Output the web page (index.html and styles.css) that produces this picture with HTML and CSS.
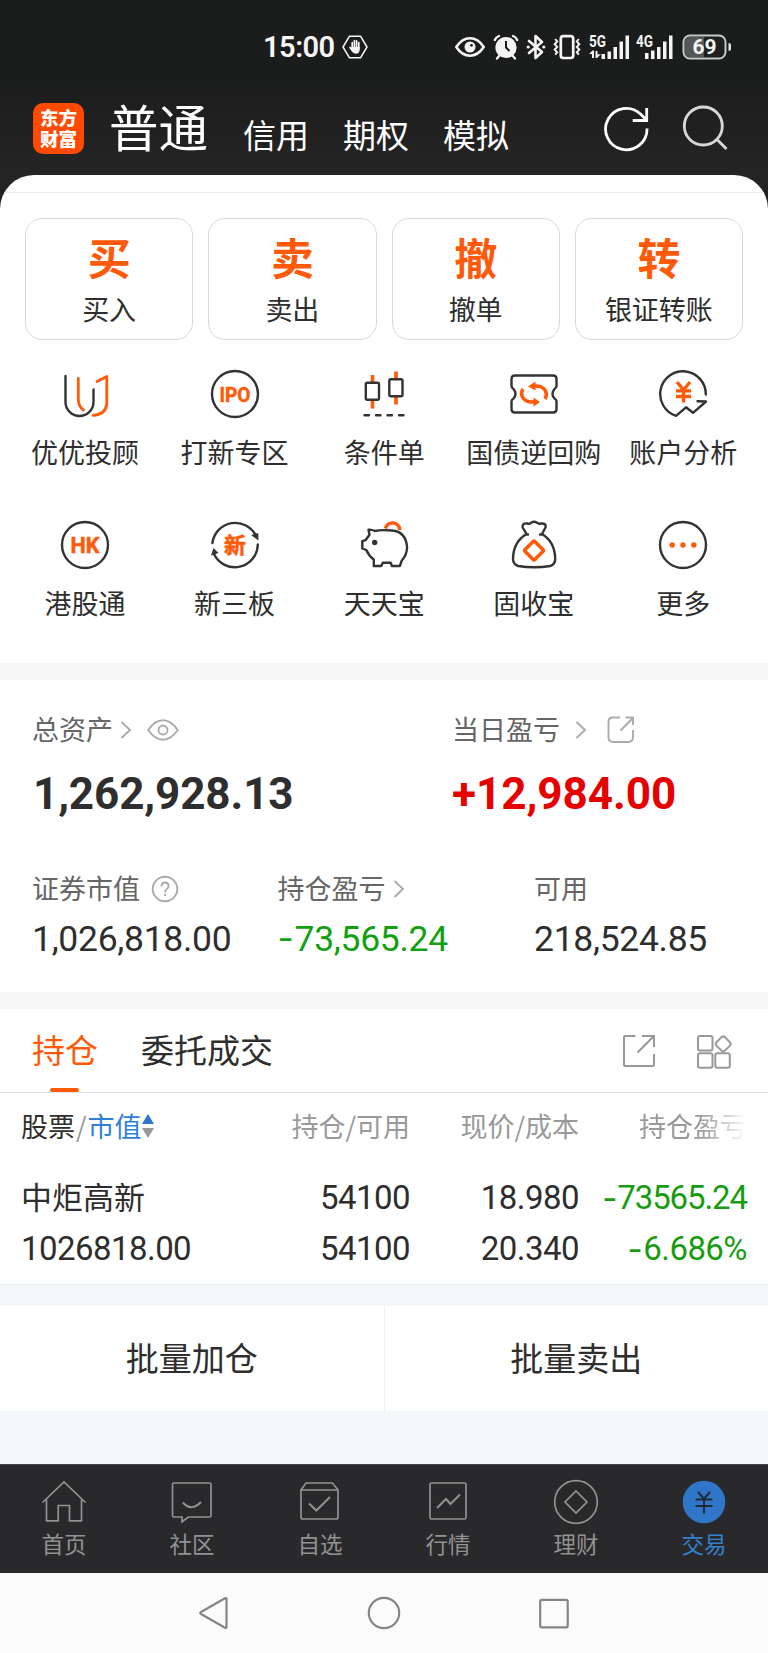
FILE: index.html
```html
<!DOCTYPE html>
<html lang="zh-CN">
<head>
<meta charset="utf-8">
<title>交易</title>
<link rel="stylesheet" href="styles.css">
</head>
<body>
<div class="top">
  <div class="status">
    <span class="clock">15:00</span>
    <svg class="hex" width="26" height="24" viewBox="0 0 26 24"><path d="M7.500 1.200h11L25 12l-6.500 10.800h-11L1 12z" fill="none" stroke="#f4f4f4" stroke-width="1.500" stroke-linejoin="round"/><g stroke="#f4f4f4" stroke-width="1.700" stroke-linecap="round"><path d="M10.200 7.500v6M12.400 5.500v8M14.600 5.800v8M16.800 7.700v6M8 12.500l3 4"/></g><path d="M9.400 12h8.200v3.500q-.8 3.300-3.600 3.300-2.300 0-3.600-2.500z" fill="#f4f4f4"/></svg>
    <svg class="s-eye" width="30" height="20" viewBox="0 0 30 20"><path d="M1.300 10Q7 1.300 15 1.300T28.700 10Q23 18.700 15 18.700T1.300 10z" fill="none" stroke="#f4f4f4" stroke-width="2.600"/><circle cx="15" cy="10" r="5.500" fill="#f4f4f4"/><circle cx="16.500" cy="8.300" r="1.400" fill="#1b1c1c"/></svg>
    <svg class="s-alarm" width="26" height="26" viewBox="0 0 26 26"><circle cx="13" cy="13.500" r="10.600" fill="#f4f4f4"/><path d="M13 7v6.500l3.500 3.500" fill="none" stroke="#1b1c1c" stroke-width="2"/><path d="M1.800 6q1.200-3 4.200-4M24.200 6q-1.200-3-4.200-4M4 24.500l2.500-3M22 24.500l-2.500-3" stroke="#f4f4f4" stroke-width="2.300" fill="none" stroke-linecap="round"/></svg>
    <svg class="s-bt" width="20" height="26" viewBox="0 0 20 26"><path d="M3 7l13 11-6.500 6V2L16 8 3 19" fill="none" stroke="#f4f4f4" stroke-width="2.600" stroke-linejoin="round" stroke-linecap="round"/><circle cx="2.200" cy="13" r="1.600" fill="#f4f4f4"/><circle cx="17.800" cy="13" r="1.600" fill="#f4f4f4"/></svg>
    <svg class="s-vib" width="28" height="26" viewBox="0 0 28 26"><rect x="7.800" y="2.200" width="12.400" height="21.800" rx="2.500" fill="none" stroke="#f4f4f4" stroke-width="2.700"/><path d="M2.200 5l2 2.500-2.500 2.700 2.500 2.700-2.500 2.700 2.500 2.600-2 2.500M25.800 5l-2 2.500 2.500 2.700-2.500 2.700 2.500 2.700-2.500 2.600 2 2.500" fill="none" stroke="#f4f4f4" stroke-width="2"/></svg>
    <svg class="s-5g" width="41" height="38" viewBox="0 -6 41 38"><text x="0" y="12.500" class="sig" textLength="17" lengthAdjust="spacingAndGlyphs">5G</text><path fill="#f4f4f4" d="M12.500 20h3.500v5h-3.500zM18.500 17.500h3.500v7.500h-3.500zM24.500 13h3.500v12h-3.500zM30.500 7.500h3.500v17.500h-3.500zM36.500 1.500h3.500v23.500h-3.500zM0 20l3.500-3.500h1.500v7.500h-2v-4zM6.500 17h2v3.500l3.500-.5-4 4h-1.500z"/></svg>
    <svg class="s-4g" width="38" height="38" viewBox="0 -6 38 38"><text x="0" y="12.500" class="sig" textLength="17" lengthAdjust="spacingAndGlyphs">4G</text><path d="M9 19h3.500v6H9zM15 16.500h3.500v8.500H15zM21 13h3.500v12H21zM27 7.500h3.500v17.500H27zM33 1.500h3.500v23.500H33z" fill="#f4f4f4"/></svg>
    <svg class="s-bat" width="50" height="26" viewBox="0 0 50 26"><rect x="1.500" y="1.500" width="42" height="23" rx="6.500" fill="#1f2020" stroke="#c8caca" stroke-width="2"/><path d="M8 3h14v20H8q-5 0-5-5V8q0-5 5-5z" fill="#555757"/><path d="M46.500 9q2.500 0 2.500 2v4q0 2-2.500 2z" fill="#e4e4e4"/><text x="22.500" y="20" text-anchor="middle" class="batt" textLength="24">69</text></svg>
  </div>
  <div class="header">
    <div class="logo">东方<br>财富</div>
    <span class="mode mode-on">普通</span>
    <span class="mode">信用</span>
    <span class="mode">期权</span>
    <span class="mode">模拟</span>
    <svg class="refresh" width="48" height="48" viewBox="0 0 48 48" fill="none" stroke="#fff" stroke-width="2.800"><path d="M45 24.500A20.700 20.700 0 1 1 38.500 10l5.500 5.500M44.700 4v12.500h-14"/></svg>
    <svg class="search" width="48" height="48" viewBox="0 0 48 48" fill="none" stroke="#d8d8d8" stroke-width="2.800"><circle cx="21.300" cy="22" r="19"/><path d="M34 34.500L44.500 45"/></svg>
  </div>
</div>

<div class="sheet">
  <div class="sheet-line"></div>
  <div class="cards">
    <div class="card"><b>买</b><span>买入</span></div>
    <div class="card"><b>卖</b><span>卖出</span></div>
    <div class="card"><b>撤</b><span>撤单</span></div>
    <div class="card"><b>转</b><span>银证转账</span></div>
  </div>
  <div class="grid">
    <div class="tool"><svg viewBox="0 0 50 50"><path class="k" d="M5.500 7v26a14 14 0 0 0 28 0V20.500"/><path class="o" d="M18.300 9.500V30q0 7.500 5.200 11M37 12.500l9.800-5V35q-1.500 11-14 11.300"/></svg><span>优优投顾</span></div>
    <div class="tool"><svg viewBox="0 0 50 50"><circle class="k" cx="25" cy="25" r="23"/><text x="25" y="32.500" class="ic ipo" textLength="31" lengthAdjust="spacingAndGlyphs">IPO</text></svg><span>打新专区</span></div>
    <div class="tool"><svg viewBox="0 0 50 50"><path class="o w" d="M13.500 6v7M13.500 32v7.500M37 2.500v7M37 28v7.500"/><rect class="k" x="6.800" y="13.800" width="13.200" height="17" rx="1.500"/><rect class="k" x="30.300" y="10.300" width="13.200" height="17" rx="1.500"/><path class="k" stroke-dasharray="4.500 7" d="M5.500 46.300h41"/></svg><span>条件单</span></div>
    <div class="tool"><svg viewBox="0 0 50 50"><path class="k" d="M6 6.500h38q3.500 0 3.500 3.500v7q0 2-2 3-4 5 0 9.500 2 1 2 3V40q0 3.500-3.500 3.500H6q-3.500 0-3.500-3.500v-7.500q0-2 2-3 4-4.500 0-9.500-2-1-2-3v-7q0-3.500 3.500-3.500z"/><path class="o w" d="M14 20q-3 5 .5 9.500 2.500 3.500 9 3.500h3M36 30q3-5-.5-9.500-2.500-3.500-9-3.500h-3"/><path d="M19 17.500l7.500-5v9zM31 33l-6.500 4.500v-9z" fill="#ff5a0a"/></svg><span>国债逆回购</span></div>
    <div class="tool"><svg viewBox="0 0 50 50"><path class="k" d="M47.800 25.500A22.800 22.800 0 1 0 18 46.800l10-8.500 7 5.500L48 32.500l-8.500-.2"/><path class="o yen" d="M19 13l6.500 8 6.500-8M25.500 21v12.500M18 21.800h15M18 27.500h15"/></svg><span>账户分析</span></div>
    <div class="tool"><svg viewBox="0 0 50 50"><circle class="k" cx="25" cy="25" r="23"/><text x="25" y="32.800" class="ic hk" textLength="29" lengthAdjust="spacingAndGlyphs">HK</text></svg><span>港股通</span></div>
    <div class="tool"><svg viewBox="0 0 50 50"><path class="k" d="M2.400 23A23 23 0 0 1 46 16M47.800 24.500A23 23 0 0 1 4 34"/><path d="M41 15l7.300-2 .2 7.500zM1 35.500l2.500-7.500 5 5z" fill="#333"/><text x="25" y="33" class="ic xin">新</text></svg><span>新三板</span></div>
    <div class="tool"><svg viewBox="0 0 50 50"><path class="o w" d="M26.500 8.500a7.200 7.200 0 0 1 14.200 1.500"/><path class="k" d="M16 11q-4-1.800-6.500-1.300l1 5-4 5.500-3.200 1v7.300l4 1.500q2.500 6 7.500 9.500v6.500h7.500l1.500-3.200h8l1 3.200h8l2-5.500q5-5.500 5.300-13Q47 11.500 33 10.500 22 9.500 16 11z"/><circle cx="15.700" cy="22.500" r="2.700" fill="#333"/></svg><span>天天宝</span></div>
    <div class="tool"><svg viewBox="0 0 50 50"><path class="k" d="M17 14.500h2M17.500 14L13.700 7.500q-.7-4.700 4.500-4 2.500.8 3.800-.8 3-1.800 6 0 1.500 1.500 4 .8 5.500-.5 4.500 4L33 14q13 8 13.200 25 0 5.500-5 7-16 2.500-32 0-5-1.500-5.200-7Q4.200 22 17.500 14zM31 14.500h2"/><rect class="o dia" x="18" y="23.500" width="14" height="14" rx="1.500" transform="rotate(45 25 30.500)"/></svg><span>固收宝</span></div>
    <div class="tool"><svg viewBox="0 0 50 50"><circle class="k" cx="25" cy="25" r="23"/><g fill="#ff5a0a"><circle cx="14.200" cy="25" r="2.700"/><circle cx="25" cy="25" r="2.700"/><circle cx="35.800" cy="25" r="2.700"/></g></svg><span>更多</span></div>
  </div>
</div>

<div class="assets">
  <div class="totals">
    <div class="stat total">
      <div class="label">总资产<svg class="chev" width="12" height="20" viewBox="0 0 12 20"><path d="M1.500 2l8.500 8-8.500 8"/></svg><svg class="eye" width="32" height="22" viewBox="0 0 32 22"><path d="M1.200 11Q8 1.300 16 1.300T30.800 11Q24 20.700 16 20.700T1.200 11z"/><circle cx="16" cy="11" r="4.500"/></svg></div>
      <div class="big">1,262,928.13</div>
    </div>
    <div class="stat">
      <div class="label">当日盈亏<svg class="chev far" width="12" height="20" viewBox="0 0 12 20"><path d="M1.500 2l8.500 8-8.500 8"/></svg><svg class="share" width="28" height="28" viewBox="0 0 28 28"><path d="M13 1.500H6Q1.500 1.500 1.500 6v15q0 5 5 5h14.500q5 0 5-5v-7M13.500 14.500L26 2M18.500 1.500H26V9"/></svg></div>
      <div class="big red">+12,984.00</div>
    </div>
  </div>
  <div class="details">
    <div class="stat"><div class="label">证券市值<svg class="help" width="28" height="28" viewBox="0 0 28 28"><circle cx="14" cy="14" r="12.300"/><path d="M10.500 11.500q0-4 3.500-4t3.500 3.500q0 2-1.800 3.200-1.700 1.200-1.700 3.300M14 19v2"/></svg></div><div class="mid">1,026,818.00</div></div>
    <div class="stat"><div class="label">持仓盈亏<svg class="chev" width="12" height="20" viewBox="0 0 12 20"><path d="M1.500 2l8.500 8-8.500 8"/></svg></div><div class="mid green"><i>-</i>73,565.24</div></div>
    <div class="stat"><div class="label">可用</div><div class="mid">218,524.85</div></div>
  </div>
</div>

<div class="tabs">
  <span class="tab on">持仓</span>
  <span class="tab">委托成交</span>
  <svg class="tab-share" width="34" height="34" viewBox="0 0 34 34"><path d="M13.500 2H3q-1 0-1 1v28q0 1 1 1h28q1 0 1-1V20M15.500 18.500L31.500 2.500M20 2h12v11"/></svg>
  <svg class="tab-grid" width="36" height="36" viewBox="0 0 36 36"><rect x="2" y="2" width="14.500" height="14.500" rx="2"/><rect x="2" y="19.300" width="14.500" height="14.500" rx="2"/><rect x="19.300" y="19.300" width="14.500" height="14.500" rx="2"/><rect x="21.200" y="3.900" width="12" height="12" rx="2.800" transform="rotate(45 27.200 9.900)"/></svg>
</div>

<div class="table">
  <div class="row head">
    <div class="first"><span class="dark">股票</span><span class="slash">/</span><span class="blue">市值</span><svg width="12" height="26" viewBox="0 0 12 26"><path d="M6 1l6 10H0z" fill="#2f75c8"/><path d="M6 25L0 15h12z" fill="#999"/></svg></div>
    <div>持仓/可用</div><div>现价/成本</div><div class="fade">持仓盈亏</div>
  </div>
  <div class="row name"><div class="first">中炬高新</div><div>54100</div><div>18.980</div><div class="green loss"><i>-</i>73565.24</div></div>
  <div class="row"><div class="first">1026818.00</div><div>54100</div><div>20.340</div><div class="green"><i>-</i>6.686%</div></div>
</div>

<div class="batch"><div>批量加仓</div><div>批量卖出</div></div>

<div class="nav">
  <div class="item"><svg viewBox="0 0 48 48"><path d="M2.500 24.500L24 4l21.500 20.500M6.500 21.500V42.800h11.700V27.500H29.500v15.300h12V21.500"/></svg><span>首页</span></div>
  <div class="item"><svg viewBox="0 0 48 48"><path d="M6 5h35.500q1.500 0 1.500 1.500v31q0 1.500-1.500 1.500H20.500L14 43.800V39H6q-1.500 0-1.500-1.500v-31Q4.500 5 6 5z"/><path d="M14.800 24.500Q23.500 34 33 24" stroke-width="2"/></svg><span>社区</span></div>
  <div class="item"><svg viewBox="0 0 48 48"><path d="M5 12v27q0 2 2 2h33q2 0 2-2V12zM5 12l5-7h26.500l5.500 7"/><path d="M13 25.500l7.300 7L34 19" stroke-width="2"/></svg><span>自选</span></div>
  <div class="item"><svg viewBox="0 0 48 48"><rect x="6" y="5" width="36" height="36" rx="1.500"/><path d="M13 30l9-9 4.500 5 9.500-9.500" stroke-width="2"/></svg><span>行情</span></div>
  <div class="item"><svg viewBox="0 0 48 48"><circle cx="24" cy="24" r="21.300"/><path d="M24 13l11 11-11 11-11-11z"/></svg><span>理财</span></div>
  <div class="item active"><svg viewBox="0 0 48 48"><circle cx="24" cy="24" r="21.300" class="fill"/><path class="cut" d="M18 14l6 7 6-7M24 21v14.500M15.500 21.500h17M15.500 28h17"/></svg><span>交易</span></div>
</div>

<div class="system">
  <svg width="36" height="36" viewBox="0 0 36 36"><path d="M29.500 4v28q0 1.500-1.500.8L4 19q-1.500-1 0-2L28 3.300q1.500-.8 1.500.7z"/></svg>
  <svg width="36" height="36" viewBox="0 0 36 36"><circle cx="18" cy="18" r="15.200"/></svg>
  <svg width="36" height="36" viewBox="0 0 36 36"><rect x="4.200" y="4.800" width="27.500" height="27.500" rx="1.500"/></svg>
</div>
</body>
</html>
```
FILE: styles.css
```css
* { box-sizing: border-box; }
body {
  margin: 0;
  width: 768px;
  height: 1653px;
  overflow: hidden;
  background: #fff;
  color: #2e2e2e;
  font-family: "Noto Sans CJK SC", sans-serif;
}
svg { display: block; flex: none; }
i { font-style: normal; font-family: Inter, sans-serif; margin-right: 1px; }

.top { height: 209px; background: linear-gradient(#1b1c1c 80px, #262525 175px, #202020); }
.status { height: 93px; display: flex; align-items: center; padding-left: 263px; }
.clock { width: 73px; font: 600 29px/30px Roboto, sans-serif; color: #f6f6f6; letter-spacing: -0.500px; }
.hex { margin-left: 6px; }
.s-eye { margin-left: 87px; }
.s-alarm { margin-left: 8px; }
.s-bt { margin-left: 7px; }
.s-vib { margin-left: 7px; }
.s-5g { margin-left: 8px; }
.s-4g { margin-left: 6px; }
.s-bat { margin-left: 8px; }
.sig { font: 700 16px Roboto, sans-serif; fill: #f4f4f4; }
.batt { font: 700 21px Roboto, sans-serif; fill: #f4f4f4; }

.header { display: flex; height: 82px; padding-left: 33px; color: #fff; }
.logo {
  width: 51px; height: 51px; margin: 10px 25px 0 0; padding-top: 4px;
  border-radius: 10px; background: #ff4a00;
  text-align: center;
  font: 900 18.500px/21px "Noto Sans CJK SC", sans-serif;
}
.mode { font-size: 33px; line-height: 82px; margin-right: 34px; }
.mode-on { font-size: 49.500px; line-height: 66px; margin-right: 35px; }
.refresh { margin: 11px 0 0 59px; }
.search { margin: 11px 0 0 32px; }

.sheet { height: 488px; margin-top: -34px; background: #fff; border-radius: 34px 34px 0 0; overflow: hidden; }
.sheet-line { height: 18px; border-bottom: 1px solid #ececec; }
.cards { display: flex; gap: 15px; padding: 25px 25px 0; }
.card {
  flex: 1; height: 122px; border: 1px solid #d9dbdb; border-radius: 17px;
  display: flex; flex-direction: column; align-items: center;
}
.card b { font-size: 43px; line-height: 48px; color: #ff5a0a; margin-top: 13px; font-weight: 700; }
.card span { font-size: 27px; line-height: 40px; margin-top: 9px; }
.grid { display: grid; grid-template-columns: repeat(5, 149.600px); grid-auto-rows: 151px; padding: 29px 0 0 10.200px; }
.tool { display: flex; flex-direction: column; align-items: center; font-size: 27px; line-height: 40px; white-space: nowrap; }
.tool svg { width: 50px; height: 50px; margin-bottom: 13px; }
.k, .o { fill: none; stroke: #333; stroke-width: 2.400; stroke-linejoin: round; stroke-linecap: round; }
.o { stroke: #ff5a0a; stroke-width: 2.800; }
.o.w { stroke-width: 3.600; stroke-linecap: butt; }
.o.yen { stroke-width: 3.300; stroke-linecap: butt; }
.o.dia { stroke-width: 3.600; }
.ic { text-anchor: middle; fill: #ff5a0a; stroke: #ff5a0a; stroke-width: 0.500; font: 700 21px Roboto, sans-serif; }
.ic.hk { font-size: 22px; }
.ic.xin { font: 700 22px "Noto Sans CJK SC", sans-serif; }

.assets { height: 346px; border-top: 17px solid #f6f6f6; border-bottom: 17px solid #f6f6f6; padding-top: 29px; }
.totals { display: flex; height: 159px; padding-left: 32px; }
.total { width: 420px; }
.label { display: flex; align-items: center; font-size: 27px; line-height: 40px; height: 40px; color: #666; }
.label svg { fill: none; stroke: #ababab; stroke-width: 1.900; margin-top: 1px; }
.label .chev { margin-left: 7px; }
.label .far { margin-left: 15px; }
.eye { margin-left: 15px; }
.share { margin-left: 20px; }
.help { margin-left: 11px; }
.big { font: 700 44px/54px Roboto, sans-serif; margin-top: 18px; }
.total .big { padding-left: 1px; letter-spacing: -0.100px; }
.red { color: #e60000; }
.green { color: #189c12; }
.details { display: grid; grid-template-columns: 245.500px 256.500px 1fr; padding-left: 32px; }
.mid { font: 400 35.500px/44px Roboto, sans-serif; margin-top: 9px; letter-spacing: -0.300px; }
.mid.green { color: #10a010; }

.tabs { height: 84px; border-bottom: 1px solid #e3e6e6; display: flex; padding-left: 32px; }
.tab { font-size: 33px; line-height: 80px; margin-right: 43px; position: relative; }
.on { color: #ff5a0a; }
.on::after { content: ""; position: absolute; left: 18px; bottom: 0; width: 29px; height: 4px; border-radius: 2px; background: #ff5a0a; }
.tabs svg { fill: none; stroke: #999; stroke-width: 2; }
.tab-share { margin: 25px 0 0 306px; }
.tab-grid { margin: 25px 0 0 40px; }

.table { height: 192px; border-bottom: 1px solid #eceeee; }
.row { display: grid; grid-template-columns: 240px 149px 169px 168px; padding-left: 21px; height: 51px; align-items: center; font: 400 33px/50px Roboto, "Noto Sans CJK SC", sans-serif; letter-spacing: -0.550px; white-space: nowrap; }
.row > div { min-width: 0; display: flex; justify-content: flex-end; }
.row > .first { justify-content: flex-start; }
.row.head { height: 67px; padding-bottom: 1px; font: 400 27px/64px "Noto Sans CJK SC", sans-serif; letter-spacing: 0; color: #999; }
.row.head > .first { align-items: center; }
.slash { margin: 0 1px; }
.dark { color: #2e2e2e; }
.blue { color: #2f80d8; }
.fade { -webkit-mask-image: linear-gradient(90deg, #000 120px, transparent); mask-image: linear-gradient(90deg, #000 120px, transparent); }
.row.name { height: 63px; padding-top: 13px; }
.row .loss { letter-spacing: -1.100px; }
.name .first { font: 400 31px/46px "Noto Sans CJK SC", sans-serif; letter-spacing: 0; padding-bottom: 4px; }

.batch { height: 179px; display: flex; border-top: 21px solid #f4f7f7; border-bottom: 53px solid #f4f7f9; }
.batch div { flex: 1; text-align: center; font-size: 33px; line-height: 102px; }
.batch div:first-child { border-right: 1px solid #edf0f0; }

.nav { height: 109px; display: flex; background: #29292b; border-top: 1px solid #414645; color: #929292; }
.item { flex: 1; display: flex; flex-direction: column; align-items: center; font-size: 22.500px; line-height: 30px; }
.item svg { width: 48px; height: 48px; margin: 13px 0 2px; fill: none; stroke: #929292; stroke-width: 1.700; }
.active { color: #3380d0; }
.active .fill { fill: #2f75c8; stroke: none; }
.active .cut { stroke: #222a35; stroke-width: 2; }

.system { height: 81px; background: #fbfbfc; display: flex; justify-content: center; gap: 133.500px; padding-top: 22px; }
.system svg { fill: none; stroke: #858585; stroke-width: 2.200; }
```
